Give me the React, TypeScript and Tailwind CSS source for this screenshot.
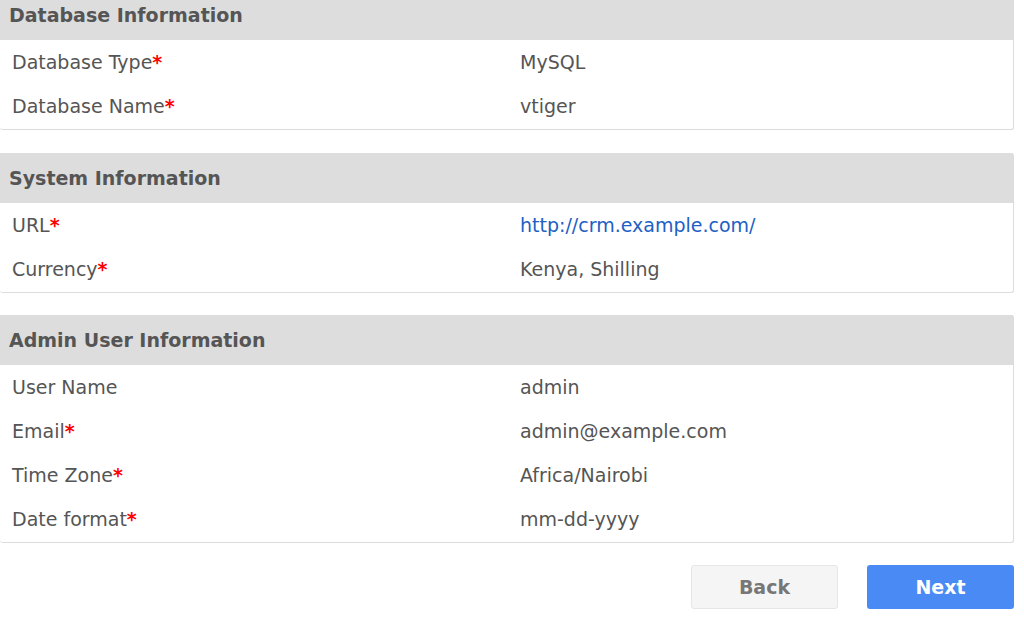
import React from "react";

type Row = { label: string; required?: boolean; value: string; link?: boolean };

const sections: { title: string; rows: Row[]; gap: string }[] = [
  {
    title: "Database Information",
    gap: "-mt-[10px]",
    rows: [
      { label: "Database Type", required: true, value: "MySQL" },
      { label: "Database Name", required: true, value: "vtiger" },
    ],
  },
  {
    title: "System Information",
    gap: "mt-[23px]",
    rows: [
      { label: "URL", required: true, value: "http://crm.example.com/", link: true },
      { label: "Currency", required: true, value: "Kenya, Shilling" },
    ],
  },
  {
    title: "Admin User Information",
    gap: "mt-[22px]",
    rows: [
      { label: "User Name", value: "admin" },
      { label: "Email", required: true, value: "admin@example.com" },
      { label: "Time Zone", required: true, value: "Africa/Nairobi" },
      { label: "Date format", required: true, value: "mm-dd-yyyy" },
    ],
  },
];

const Panel = ({ title, rows, gap }: { title: string; rows: Row[]; gap: string }) => (
  <div
    className={`${gap} w-[1014px] border-r border-b border-[#dcdcdc] rounded-r-[3px] rounded-b-[3px] bg-white pb-[1px]`}
  >
    <div className="h-[50px] bg-[#dddddd] flex items-center pl-[9px] text-[19px] font-bold text-[#555555]">
      {title}
    </div>
    {rows.map((r) => (
      <div key={r.label} className="h-[44px] flex items-center text-[19px]">
        <div className="w-[520px] pl-[12px] text-[#555555]">
          {r.label}
          {r.required && <span className="text-[#ff0000] font-bold">*</span>}
        </div>
        <div className={r.link ? "text-[#2160c4]" : "text-[#555555]"}>{r.value}</div>
      </div>
    ))}
  </div>
);

export default function App() {
  return (
    <div
      className="w-[1024px] h-[628px] overflow-hidden bg-white"
      style={{ fontFamily: '"DejaVu Sans", sans-serif' }}
    >
      <div className="flex flex-col">
        {sections.map((s) => (
          <Panel key={s.title} title={s.title} rows={s.rows} gap={s.gap} />
        ))}
      </div>
      <div className="w-[1014px] flex justify-end gap-[29px] mt-[22px]">
        <button className="w-[147px] h-[44px] rounded-[3px] bg-[#f5f5f5] border border-[#e6e6e6] text-[#777777] font-bold text-[19px]">
          Back
        </button>
        <button className="w-[147px] h-[44px] rounded-[3px] bg-[#4a8af4] text-white font-bold text-[19px]">
          Next
        </button>
      </div>
    </div>
  );
}
